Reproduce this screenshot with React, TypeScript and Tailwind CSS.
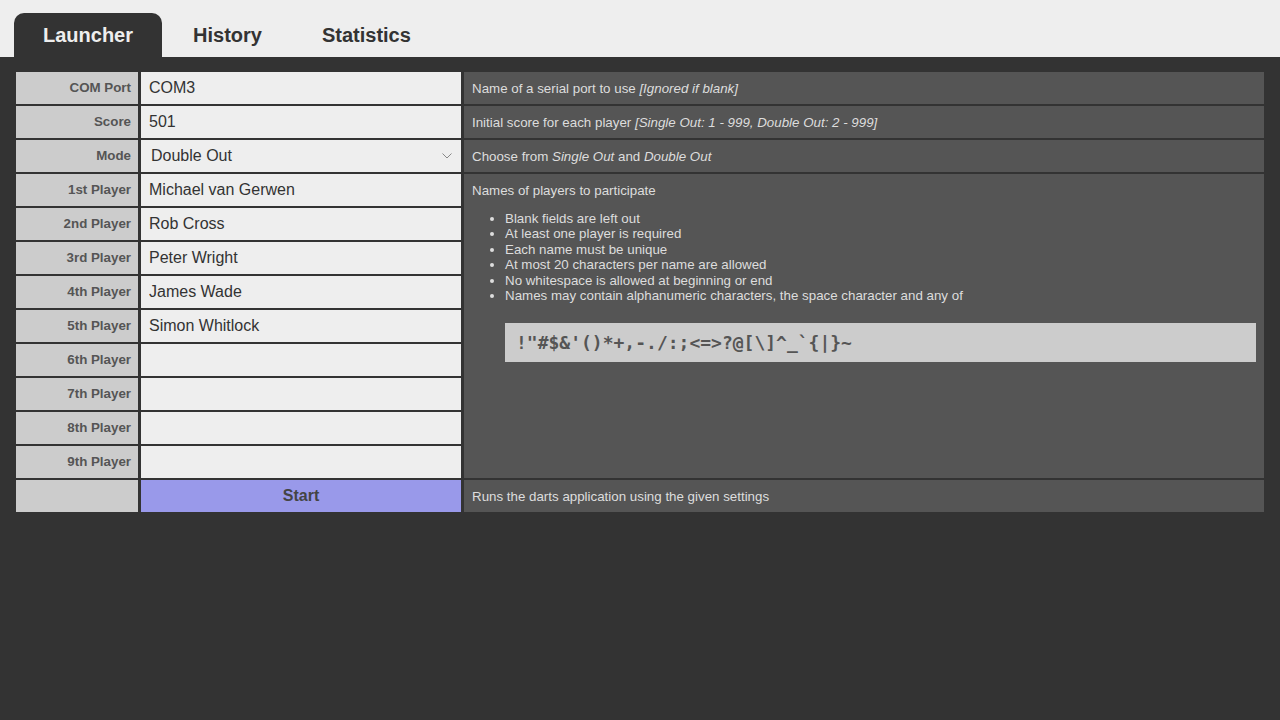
import { useState } from 'react';

const tabs = ['Launcher', 'History', 'Statistics'];

const players = [
  'Michael van Gerwen',
  'Rob Cross',
  'Peter Wright',
  'James Wade',
  'Simon Whitlock',
  '',
  '',
  '',
  '',
];

const ordinals = ['1st', '2nd', '3rd', '4th', '5th', '6th', '7th', '8th', '9th'];

const rules = [
  'Blank fields are left out',
  'At least one player is required',
  'Each name must be unique',
  'At most 20 characters per name are allowed',
  'No whitespace is allowed at beginning or end',
  'Names may contain alphanumeric characters, the space character and any of',
];

const Label = ({ title, row }: { title: string; row: number }) => (
  <div
    className="flex items-center justify-end bg-[#cccccc] pr-[7px] text-[13.33px] font-bold text-[#555555]"
    style={{ gridRow: row }}
  >
    {title}
  </div>
);

const Desc = ({ row, children }: { row: number; children: React.ReactNode }) => (
  <div
    className="flex items-center bg-[#555555] px-2 pt-px text-[13.33px] text-[#dddddd]"
    style={{ gridRow: row }}
  >
    <span>{children}</span>
  </div>
);

const inputClass =
  'h-full w-full bg-[#eeeeee] px-2 text-[16px] text-[#333333] outline-none';

const App = () => {
  const [active, setActive] = useState(0);
  const [port, setPort] = useState('COM3');
  const [score, setScore] = useState('501');
  const [mode, setMode] = useState('double');
  const [names, setNames] = useState(players);

  return (
    <div className="min-h-screen bg-[#333333] font-['Liberation_Sans',Arial,sans-serif]">
      <div className="flex h-[57px] items-end gap-[2px] bg-[#eeeeee] pl-[14px]">
        {tabs.map((tab, i) => (
          <button
            key={tab}
            onClick={() => setActive(i)}
            className={
              i === active
                ? 'h-[44px] rounded-t-[10px] bg-[#333333] px-[29px] text-[20px] font-bold text-[#eeeeee]'
                : 'h-[44px] px-[29px] text-[20px] font-bold text-[#333333]'
            }
          >
            {tab}
          </button>
        ))}
      </div>

      <div className="grid grid-cols-[122px_320px_800px] grid-rows-[repeat(13,32px)] gap-x-[3px] gap-y-[2px] pl-4 pt-[15px]">
        <Label title="COM Port" row={1} />
        <div style={{ gridRow: 1 }}>
          <input className={inputClass} value={port} onChange={(e) => setPort(e.target.value)} />
        </div>
        <Desc row={1}>
          Name of a serial port to use <i>[Ignored if blank]</i>
        </Desc>

        <Label title="Score" row={2} />
        <div style={{ gridRow: 2 }}>
          <input className={inputClass} value={score} onChange={(e) => setScore(e.target.value)} />
        </div>
        <Desc row={2}>
          Initial score for each player <i>[Single Out: 1 - 999, Double Out: 2 - 999]</i>
        </Desc>

        <Label title="Mode" row={3} />
        <div className="relative" style={{ gridRow: 3 }}>
          <select
            className="h-full w-full appearance-none bg-[#eeeeee] pl-[10px] text-[16px] text-[#333333] outline-none"
            value={mode}
            onChange={(e) => setMode(e.target.value)}
          >
            <option value="single">Single Out</option>
            <option value="double">Double Out</option>
          </select>
          <svg
            className="pointer-events-none absolute right-[9px] top-[13px]"
            width="10"
            height="6"
            viewBox="0 0 10 6"
            fill="none"
            stroke="#888888"
            strokeWidth="1"
          >
            <path d="M0.5 0.5 L5 5 L9.5 0.5" />
          </svg>
        </div>
        <Desc row={3}>
          Choose from <i>Single Out</i> and <i>Double Out</i>
        </Desc>

        {names.map((name, i) => (
          <Label key={`l${i}`} title={`${ordinals[i]} Player`} row={i + 4} />
        ))}
        {names.map((name, i) => (
          <div key={`i${i}`} style={{ gridRow: i + 4 }}>
            <input
              className={inputClass}
              value={name}
              onChange={(e) => {
                const next = [...names];
                next[i] = e.target.value;
                setNames(next);
              }}
            />
          </div>
        ))}
        <div className="row-[4/13] col-[3] bg-[#555555] px-2 pt-[9px] text-[13.33px] text-[#dddddd]">
          <div className="leading-[16px]">Names of players to participate</div>
          <ul className="mt-[12px] list-disc pl-[33px] leading-[15.4px]">
            {rules.map((rule) => (
              <li key={rule}>{rule}</li>
            ))}
          </ul>
          <div className="ml-[33px] mt-[20px] bg-[#cccccc] px-[11px] py-[9px] font-['DejaVu_Sans_Mono',monospace] text-[18px] font-bold leading-[21px] text-[#555555]">
            {'!"#$&\'()*+,-./:;<=>?@[\\]^_`{|}~'}
          </div>
        </div>

        <div className="bg-[#cccccc]" style={{ gridRow: 13 }} />
        <button
          className="bg-[#9999ea] text-[16px] font-bold text-[#444444]"
          style={{ gridRow: 13 }}
        >
          Start
        </button>
        <Desc row={13}>Runs the darts application using the given settings</Desc>
      </div>
    </div>
  );
};

export default App;
